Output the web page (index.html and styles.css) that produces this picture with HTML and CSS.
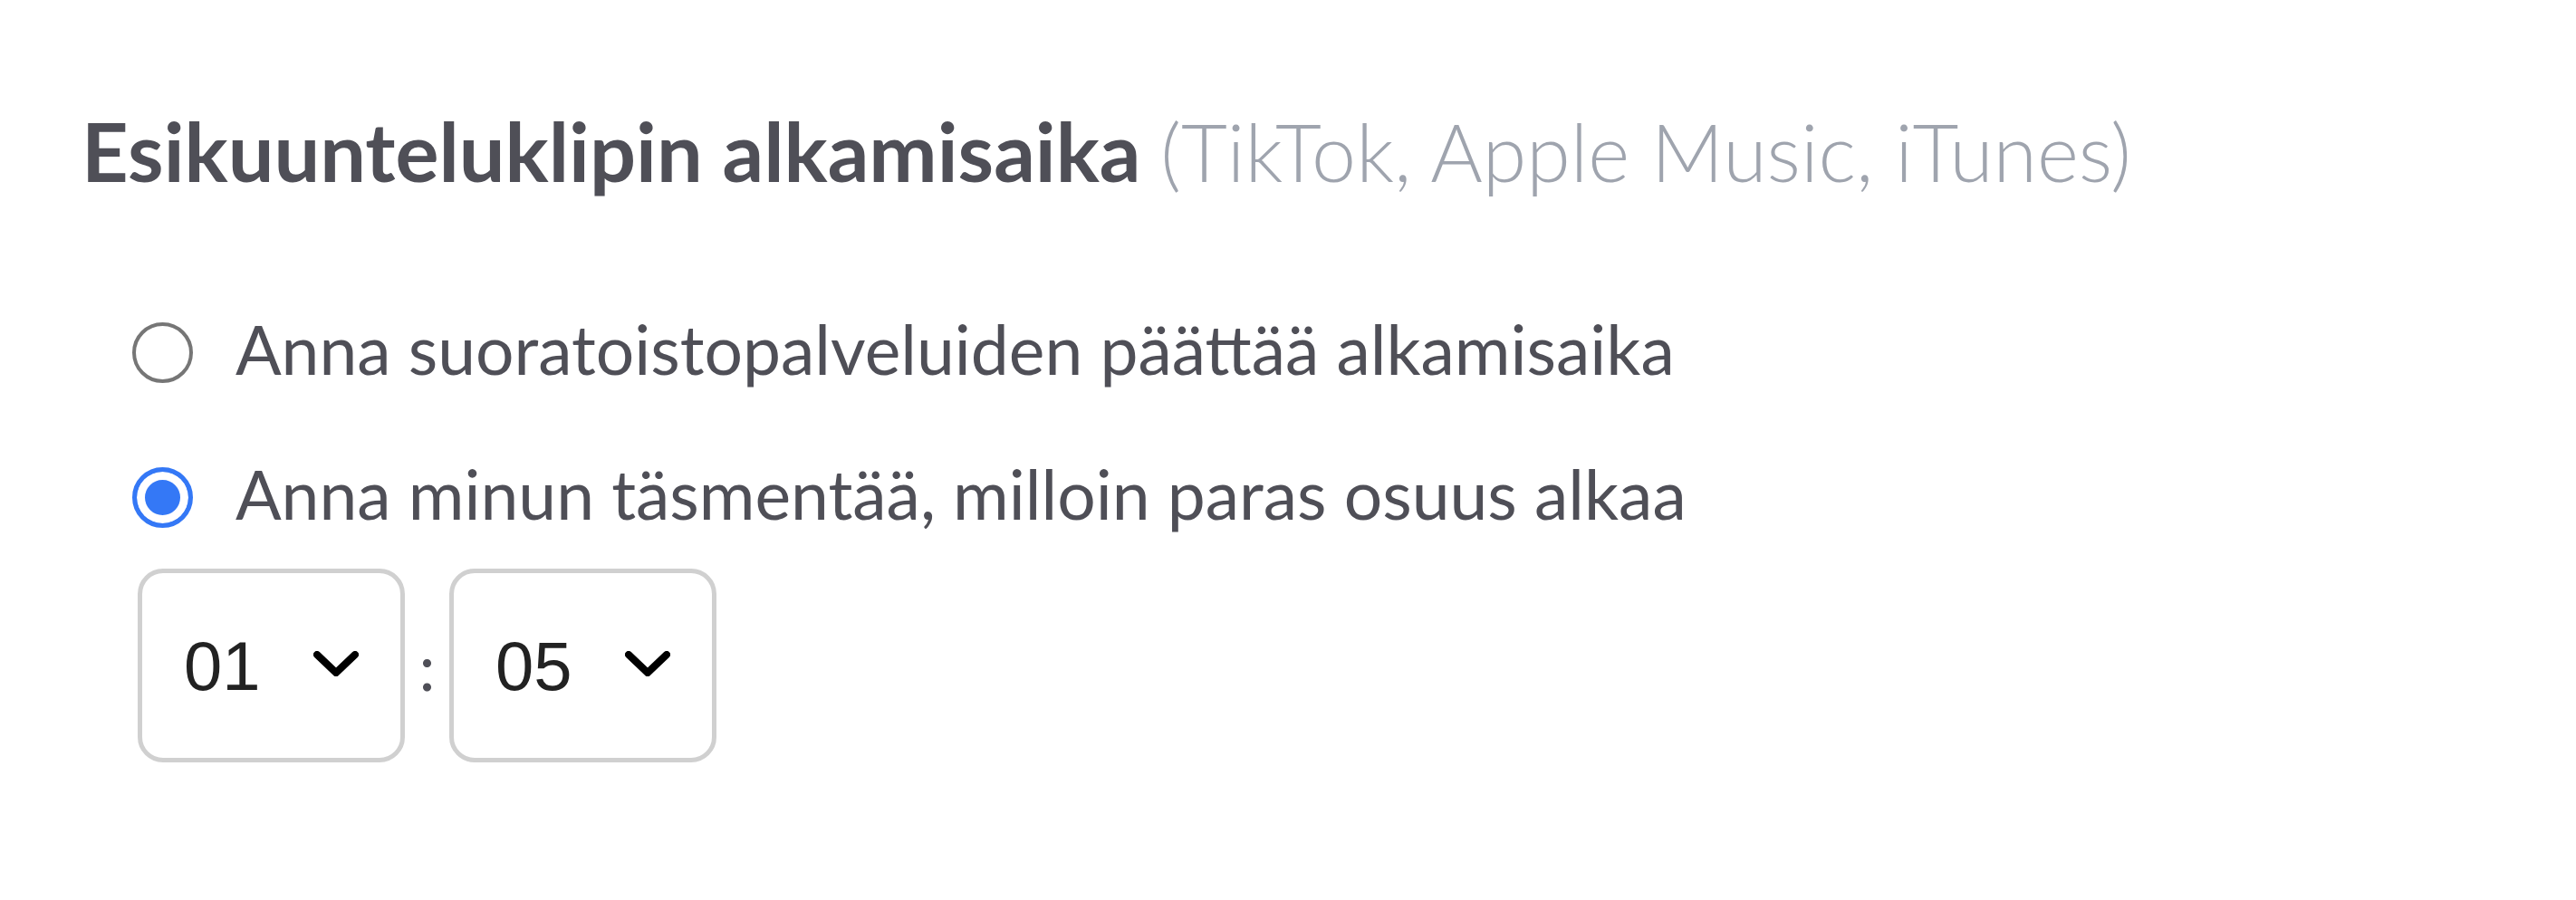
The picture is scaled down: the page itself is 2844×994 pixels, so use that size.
FILE: index.html
```html
<!DOCTYPE html>
<html lang="fi">
<head>
    <meta charset="UTF-8">
    <meta name="viewport" content="width=device-width, initial-scale=1.0">
    <title>Esikuunteluklipin alkamisaika</title>
    <link rel="stylesheet" href="styles.css">
</head>
<body>

    <section class="preview-start">
        <h2 class="section-title">
            Esikuunteluklipin alkamisaika <span class="hint">(TikTok, Apple Music, iTunes)</span>
        </h2>

        <div class="options">
            <label class="option">
                <input type="radio" name="previewStart" value="auto">
                <span class="option-text">Anna suoratoistopalveluiden päättää alkamisaika</span>
            </label>

            <label class="option">
                <input type="radio" name="previewStart" value="manual" checked>
                <span class="option-text">Anna minun täsmentää, milloin paras osuus alkaa</span>
            </label>

            <div class="time-pick">
                <div class="time-box">
                    <select id="minutes">
                        <option>00</option>
                        <option selected>01</option>
                        <option>02</option>
                        <option>03</option>
                    </select>
                    <svg class="chevron" width="50" height="28" viewBox="0 0 50 28">
                        <path d="M4 4 L25 24 L46 4" fill="none" stroke="#000" stroke-width="8" stroke-linecap="round" stroke-linejoin="round"/>
                    </svg>
                </div>
                <span class="colon">:</span>
                <div class="time-box">
                    <select id="seconds">
                        <option>00</option>
                        <option selected>05</option>
                        <option>10</option>
                        <option>15</option>
                    </select>
                    <svg class="chevron" width="50" height="28" viewBox="0 0 50 28">
                        <path d="M4 4 L25 24 L46 4" fill="none" stroke="#000" stroke-width="8" stroke-linecap="round" stroke-linejoin="round"/>
                    </svg>
                </div>
            </div>
        </div>
    </section>

</body>
</html>
```

FILE: styles.css
```css
body {
    margin: 0;
    padding: 0;
    background: #fff;
    font-family: 'Lato', 'Noto Sans', sans-serif;
    color: #4f4f57;
}

.preview-start {
    padding: 112px 0 0 90px;
}

.section-title {
    margin: 0;
    font-size: 90px;
    line-height: 108px;
    font-weight: 700;
    color: #4f4f57;
}

.hint {
    font-size: 88px;
    font-weight: 300;
    color: #9fa4ae;
}

.options {
    padding-left: 56px;
    margin-top: 114px;
}

.option {
    display: flex;
    align-items: flex-start;
    height: 100px;
    margin-bottom: 60px;
    cursor: pointer;
}

.option input {
    appearance: none;
    -webkit-appearance: none;
    box-sizing: border-box;
    width: 67px;
    height: 67px;
    margin: 21px 47px 0 0;
    border: 4px solid #767676;
    border-radius: 50%;
    background: #fff;
    flex-shrink: 0;
}

.option input:checked {
    border: 5px solid #3478f6;
    background: #3478f6;
    box-shadow: inset 0 0 0 9px #fff;
}

.option-text {
    font-size: 75px;
    line-height: 100px;
    color: #4f4f57;
}

.time-pick {
    display: flex;
    align-items: center;
    margin-top: -27px;
    padding-left: 6px;
}

.time-box {
    box-sizing: border-box;
    display: flex;
    align-items: center;
    width: 295px;
    height: 214px;
    border: 5px solid #d0d0d0;
    border-radius: 28px;
    padding: 0 46px;
}

.time-box select {
    appearance: none;
    -webkit-appearance: none;
    flex: 1;
    border: none;
    outline: none;
    background: none;
    padding: 0;
    font-family: 'Liberation Sans', Arial, sans-serif;
    font-size: 76px;
    color: #222;
}

.chevron {
    flex-shrink: 0;
    margin-top: -4px;
}

.colon {
    width: 49px;
    text-align: center;
    font-size: 72px;
    line-height: 1;
    color: #4f4f57;
}
```
